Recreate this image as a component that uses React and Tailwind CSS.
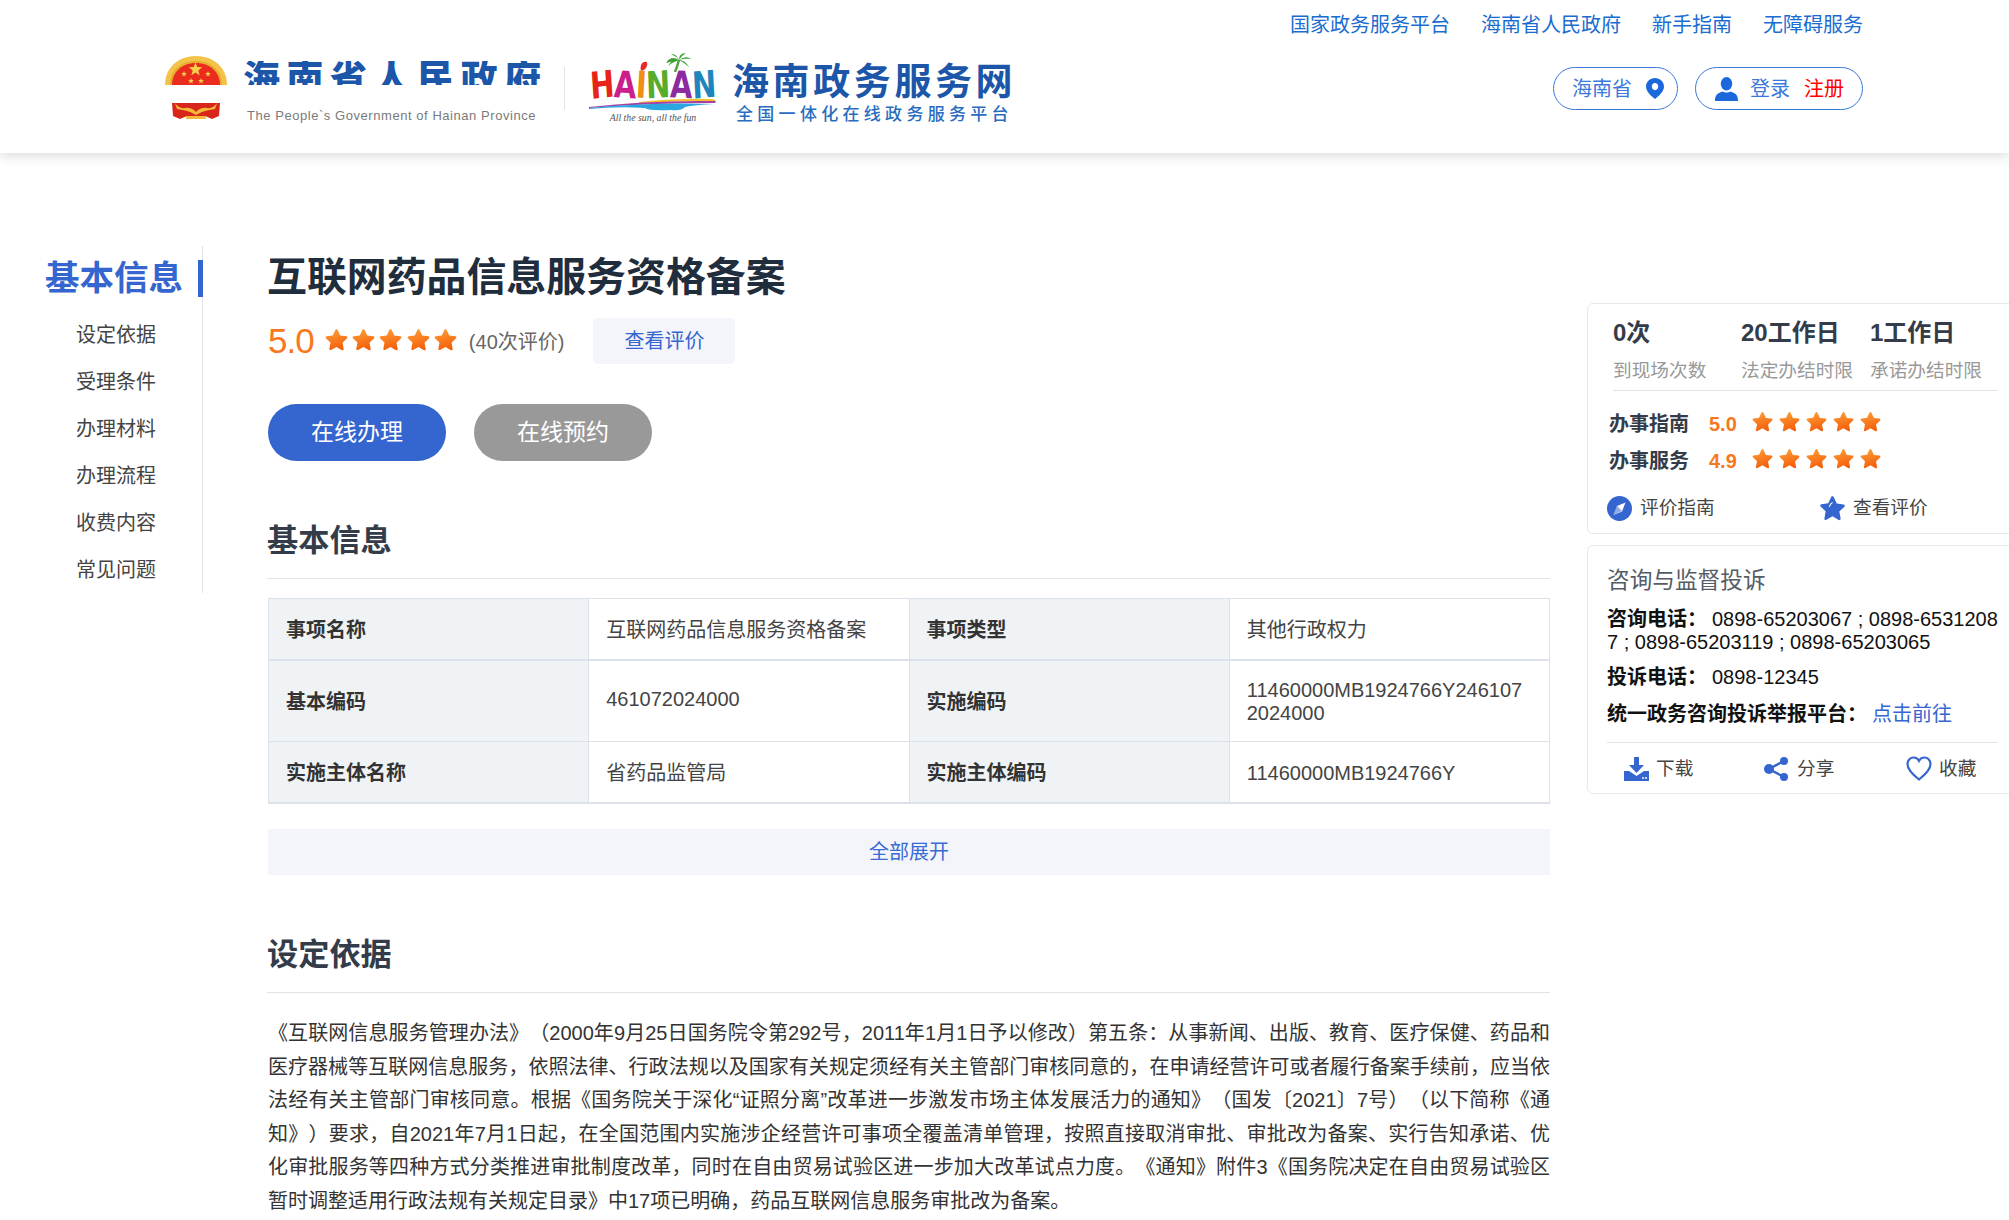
import React from "react";

const FONT = '"Liberation Sans","Noto Sans CJK SC",sans-serif';
const STAR = "M12 1.2c.5 0 .9.3 1.1.7l2.8 6 6.4.8c1 .1 1.4 1.4.7 2.1l-4.7 4.5 1.2 6.5c.2 1-.9 1.8-1.8 1.3L12 19.7l-5.7 3.2c-.9.5-2-.3-1.8-1.3l1.2-6.5-4.7-4.5c-.7-.7-.3-2 .7-2.1l6.4-.8 2.8-6c.2-.4.6-.7 1.1-.7z";

function Star({ size, id }) {
  return (
    <svg width={size} height={size} viewBox="0 0 24 24" className="shrink-0">
      <defs>
        <linearGradient id={id} x1="0" y1="0" x2="0.3" y2="1">
          <stop offset="0" stopColor="#ffa33a" />
          <stop offset="1" stopColor="#f4610d" />
        </linearGradient>
      </defs>
      <path d={STAR} fill={`url(#${id})`} />
    </svg>
  );
}

function Stars({ size, pitchClass, prefix }) {
  return (
    <div className={`flex ${pitchClass}`}>
      {[0, 1, 2, 3, 4].map((i) => (
        <Star key={i} size={size} id={`${prefix}${i}`} />
      ))}
    </div>
  );
}

function Emblem() {
  const small = (cx, cy, r) => {
    const pts = [];
    for (let i = 0; i < 10; i++) {
      const a = -Math.PI / 2 + (i * Math.PI) / 5;
      const d = i % 2 ? r * 0.42 : r;
      pts.push(`${(cx + d * Math.cos(a)).toFixed(2)},${(cy + d * Math.sin(a)).toFixed(2)}`);
    }
    return pts.join(" ");
  };
  return (
    <svg width="62" height="64" viewBox="0 0 62 64" className="shrink-0">
      <path d="M0 29C0 11 14 0 31 0s31 11 31 29z" fill="#f4c34a" />
      <path d="M5 29C5 14 16 5 31 5s26 9 26 24z" fill="#e8ac2f" />
      <path d="M7 29C7 16 17 7 31 7s24 9 24 22z" fill="#ea2c1f" />
      <polygon points={small(30.5, 13.5, 7)} fill="#f9d24a" />
      <polygon points={small(19, 18, 3)} fill="#f9d24a" />
      <polygon points={small(26, 25, 3)} fill="#f9d24a" />
      <polygon points={small(36, 25, 3)} fill="#f9d24a" />
      <polygon points={small(43, 18, 3)} fill="#f9d24a" />
      <path d="M7 47h48l-1 13-7 3-7-3-9 2-9-2-7 3-7-3z" fill="#d9261b" />
      <path d="M10 47q4 6 10 5t11 4q5-5 11-4t10-5l-2 6q-6 1-10 2t-9 4q-5-3-9-4t-10-2z" fill="#f4b93a" />
      <path d="M21 60h20v3H21z" fill="#f4b93a" />
    </svg>
  );
}

function HainanLogo() {
  const letters = [
    ["H", "#e8231a", "-rotate-[5deg]"],
    ["A", "#c9208c", "rotate-[3deg]"],
    ["I", "#ef8f14", "rotate-[4deg]"],
    ["N", "#57ac2c", "rotate-[-3deg]"],
    ["A", "#8e2a9f", "rotate-[2deg]"],
    ["N", "#1f86bd", "rotate-[-4deg]"],
  ];
  return (
    <div className="w-[128px] h-[72px] flex flex-col items-center">
      <svg width="128" height="19" viewBox="0 0 128 19" className="shrink-0">
        <path d="M86 19q3-8 4-12" stroke="#4aa238" strokeWidth="2.400" fill="none" />
        <path d="M90 7q-8-5-13 3 6-2 13-3zM90 7q-6-2-11 6 5-4 11-6zM90 7q-3-7-8-6 5 2 8 6zM90 7q0-7 7-7-5 3-7 7zM90 7q7-5 12-1-6-1-12 1zM90 7q6 0 10 7-4-4-10-7z" fill="#3ea135" />
        <path d="M52 12q2-4 6-3 1 3-1 6t-5 3q-1-3 0-6z" fill="#e62a2a" />
      </svg>
      <div className="h-[26px] flex items-center scale-y-[1.28] font-bold text-[29px] leading-[26px] tracking-[-0.5px]" style={{ fontFamily: '"DejaVu Sans",sans-serif' }}>
        {letters.map(([l, c, r], i) => (
          <span key={i} className={`inline-block ${r}`} style={{ color: c }}>{l}</span>
        ))}
      </div>
      <svg width="128" height="15" viewBox="0 0 128 15" className="shrink-0">
        <path d="M50 4Q90 0 124 1L127 3Q90 3 50 5z" fill="#f4c329" />
        <path d="M0 9Q60 2 127 3L126 5Q60 5 0 10z" fill="#a93ea5" />
        <path d="M0 10Q60 4 126 6 105 7 96 9 92 13 82 12 60 13 56 10 30 8 0 11z" fill="#2aa7e0" />
      </svg>
      <div className="mt-[-1px] italic text-[9.800px] leading-[12px] text-[#555] whitespace-nowrap" style={{ fontFamily: '"Liberation Serif",serif' }}>All the sun, all the fun</div>
    </div>
  );
}

function Header() {
  return (
    <header className="h-[153px] bg-white flex shadow-[0_3px_12px_rgba(0,0,0,0.14)] relative">
      <div className="ml-[165px] pt-[53px] flex items-start">
        <div className="pt-[3px]"><Emblem /></div>
        <div className="ml-[16px] w-[300px] pt-[8px]">
          <div className="h-[24px] overflow-hidden text-[#1c56a8] font-black text-[37px] leading-[37px] tracking-[6.500px] whitespace-nowrap">海南省人民政府</div>
          <div className="mt-[22px] ml-[4px] text-[13px] leading-[17px] tracking-[0.55px] text-[#7a7a7a] whitespace-nowrap">The People`s Government of Hainan Province</div>
        </div>
        <div className="ml-[21px] mt-[14px] w-px h-[43px] bg-[#e2e2e2]"></div>
        <div className="ml-[24px]"><HainanLogo /></div>
        <div className="ml-[15px] pt-[8px]">
          <div className="text-[#1c56a8] font-bold text-[37px] leading-[44px] tracking-[3.600px] whitespace-nowrap">海南政务服务网</div>
          <div className="ml-[4px] text-[#2a6cc0] font-medium text-[17px] leading-[20px] tracking-[4.300px] whitespace-nowrap">全国一体化在线政务服务平台</div>
        </div>
      </div>
      <div className="ml-auto mr-[146px] flex flex-col items-end">
        <nav className="flex gap-[31px] text-[20px] leading-[24px] text-[#1a6dd0] pt-[13px]">
          <span>国家政务服务平台</span>
          <span>海南省人民政府</span>
          <span>新手指南</span>
          <span>无障碍服务</span>
        </nav>
        <div className="mt-[30px] flex gap-[17px]">
          <div className="w-[125px] h-[43px] rounded-full border border-[#3b78dc] flex items-center pl-[18px] text-[20px] text-[#3b78dc]">
            <span>海南省</span>
            <svg width="18" height="21" viewBox="0 0 19 22" className="ml-[14px]">
              <path fillRule="evenodd" d="M9.5 0C4.2 0 0 4 0 9c0 5 5 10 9.5 13C14 19 19 14 19 9c0-5-4.2-9-9.5-9zm0 5.2c2 0 3.4 1.7 3.4 3.8S11.500 12.800 9.500 12.800 6.100 11.100 6.100 9s1.400-3.800 3.400-3.800z" fill="#1a68dc" />
            </svg>
          </div>
          <div className="w-[168px] h-[43px] rounded-full border border-[#3b78dc] flex items-center pl-[19px] text-[20px] text-[#3b78dc]">
            <svg width="23" height="24" viewBox="0 0 24 25">
              <ellipse cx="12" cy="7" rx="6" ry="7" fill="#1a68dc" />
              <path d="M0 25c0-6 2-8 8-10 2 1.500 6 1.500 8 0 6 2 8 4 8 10z" fill="#1a68dc" />
            </svg>
            <span className="ml-[12px]">登录</span>
            <span className="ml-[14px] text-[#ff0000]">注册</span>
          </div>
        </div>
      </div>
    </header>
  );
}

function SideNav() {
  const items = ["设定依据", "受理条件", "办理材料", "办理流程", "收费内容", "常见问题"];
  return (
    <aside className="w-[203px] shrink-0 h-[347px] border-r border-[#dfe3ea] mt-[93px]">
      <div className="flex items-center justify-end h-[37px] mt-[14px] mr-[-1px]">
        <span className="text-[34.500px] leading-[37px] font-bold text-[#3565cf] mr-[15px] whitespace-nowrap">基本信息</span>
        <span className="w-[5px] h-[37px] bg-[#3565cf]"></span>
      </div>
      <ul className="mt-[14.500px] pl-[76px] text-[20px] text-[#444]">
        {items.map((t) => (
          <li key={t} className="h-[47px] leading-[47px]">{t}</li>
        ))}
      </ul>
    </aside>
  );
}

function Cell({ head, thick, children }) {
  return (
    <div className={`${head ? "bg-[#f0f3f6] font-bold text-[#333]" : "bg-white text-[#444]"} ${thick ? "border-b-2" : "border-b"} border-r border-[#dde2ea] px-[17px] pt-[2px] flex items-center text-[20px] leading-[23px] break-all`}>
      {children}
    </div>
  );
}

function Main() {
  return (
    <main className="w-[1282px] shrink-0 ml-[65px] pt-[96px]">
      <h1 className="-ml-px text-[39.900px] leading-[56px] font-bold text-[#1f2d3d] whitespace-nowrap">互联网药品信息服务资格备案</h1>
      <div className="mt-[13px] flex items-center h-[46px]">
        <span className="text-[35px] font-light text-[#f7781d] leading-[46px] tracking-[-1px]">5.0</span>
        <div className="ml-[11px] mb-[3px]"><Stars size={23} pitchClass="gap-[4.300px]" prefix="t" /></div>
        <span className="ml-[12px] mt-[2px] text-[20px] text-[#666]">(40次评价)</span>
        <span className="ml-[29px] w-[142px] h-[46px] rounded-[5px] bg-[#f3f5fa] text-[#3565cf] text-[20px] flex items-center justify-center">查看评价</span>
      </div>
      <div className="mt-[40px] flex gap-[28px]">
        <span className="w-[178px] h-[57px] rounded-full bg-[#3565cf] text-white text-[23px] flex items-center justify-center">在线办理</span>
        <span className="w-[178px] h-[57px] rounded-full bg-[#999999] text-white text-[23px] flex items-center justify-center">在线预约</span>
      </div>
      <h2 className="-ml-px mt-[57px] h-[61px] border-b border-[#dfe3ea] text-[31.200px] leading-[45px] font-bold text-[#333c48]">基本信息</h2>
      <div className="mt-[19px] grid grid-cols-4 grid-rows-[62px_81px_62px] border-t border-l border-[#dde2ea]">
        <Cell head thick>事项名称</Cell>
        <Cell thick>互联网药品信息服务资格备案</Cell>
        <Cell head thick>事项类型</Cell>
        <Cell thick>其他行政权力</Cell>
        <Cell head>基本编码</Cell>
        <Cell><span className="-mt-[5px]">461072024000</span></Cell>
        <Cell head>实施编码</Cell>
        <Cell><span>11460000MB1924766Y2461072024000</span></Cell>
        <Cell head thick>实施主体名称</Cell>
        <Cell thick>省药品监管局</Cell>
        <Cell head thick>实施主体编码</Cell>
        <Cell thick>11460000MB1924766Y</Cell>
      </div>
      <div className="mt-[25px] h-[46px] bg-[#f3f5fa] text-[#3a6bd4] text-[20px] flex items-center justify-center">全部展开</div>
      <h2 className="-ml-px mt-[56px] h-[62px] border-b border-[#dfe3ea] text-[31.200px] leading-[48px] font-bold text-[#333c48]">设定依据</h2>
      <p className="mt-[24px] text-[20px] leading-[33.600px] text-[#333] text-justify [text-spacing-trim:space-all]">
        《互联网信息服务管理办法》（2000年9月25日国务院令第292号，2011年1月1日予以修改）第五条：从事新闻、出版、教育、医疗保健、药品和医疗器械等互联网信息服务，依照法律、行政法规以及国家有关规定须经有关主管部门审核同意的，在申请经营许可或者履行备案手续前，应当依法经有关主管部门审核同意。根据《国务院关于深化“证照分离”改革进一步激发市场主体发展活力的通知》（国发〔2021〕7号）（以下简称《通知》）要求，自2021年7月1日起，在全国范围内实施涉企经营许可事项全覆盖清单管理，按照直接取消审批、审批改为备案、实行告知承诺、优化审批服务等四种方式分类推进审批制度改革，同时在自由贸易试验区进一步加大改革试点力度。《通知》附件3《国务院决定在自由贸易试验区暂时调整适用行政法规有关规定目录》中17项已明确，药品互联网信息服务审批改为备案。
      </p>
    </main>
  );
}

function Stat({ value, label, w }) {
  return (
    <div className={`${w} shrink-0`}>
      <div className="text-[24px] leading-[32px] font-bold text-[#333c48] whitespace-nowrap">{value}</div>
      <div className="mt-[8px] text-[18.670px] leading-[28px] text-[#999] whitespace-nowrap">{label}</div>
    </div>
  );
}

function RatingRow({ label, score, prefix }) {
  return (
    <div className="flex items-center h-[37.500px] text-[20px] font-bold">
      <span className="text-[#333c48] w-[100px]">{label}</span>
      <span className="text-[#f7781d] w-[43px]">{score}</span>
      <div className="-mt-[5px]"><Stars size={21} pitchClass="gap-[6px]" prefix={prefix} /></div>
    </div>
  );
}

function Right() {
  return (
    <aside className="ml-[37px] w-[431px] shrink-0 pt-[150px]">
      <section className="h-[231px] border border-[#e8e8e8] rounded-[6px] bg-white pl-[19px] pr-[19px]">
        <div className="ml-[6px] pt-[13px] h-[87px] border-b border-[#e2e2e2] flex">
          <Stat w="w-[128px]" value="0次" label="到现场次数" />
          <Stat w="w-[129px]" value="20工作日" label="法定办结时限" />
          <Stat w="w-[128px]" value="1工作日" label="承诺办结时限" />
        </div>
        <div className="mt-[14px] ml-[2px]">
          <RatingRow label="办事指南" score="5.0" prefix="a" />
          <RatingRow label="办事服务" score="4.9" prefix="b" />
        </div>
        <div className="mt-[14px] flex items-center h-[28px] text-[18.670px] text-[#444]">
          <svg width="25" height="25" viewBox="0 0 25 25" className="shrink-0">
            <circle cx="12.500" cy="12.500" r="12.500" fill="#3565cf" />
            <path d="M18.500 6.500l-3.500 9-8.500 3.500 3.500-9z" fill="#fff" />
            <path d="M10 10l5 5-8.500 4z" fill="#3565cf" opacity=".55" />
          </svg>
          <span className="ml-[8px] w-[179px]">评价指南</span>
          <svg width="27" height="26" viewBox="0 0 24 24" className="shrink-0">
            <path d={STAR} fill="#3565cf" />
            <path d="M12 7q-2 1-3 4" stroke="#fff" strokeWidth="1" fill="none" />
          </svg>
          <span className="ml-[7px]">查看评价</span>
        </div>
      </section>
      <section className="mt-[11px] h-[249px] border border-[#e8e8e8] rounded-[6px] bg-white pl-[19px] w-full">
        <div className="w-[391px]">
          <h3 className="pt-[19px] text-[22.670px] leading-[30px] text-[#555c66]">咨询与监督投诉</h3>
          <p className="mt-[13px] w-[395px] text-[20px] leading-[23px] text-[#111] break-all">
            <b className="mr-[5px]">咨询电话：</b>0898-65203067 ; 0898-65312087 ; 0898-65203119 ; 0898-65203065
          </p>
          <p className="mt-[12px] text-[20px] leading-[23px] text-[#111]">
            <b className="mr-[5px]">投诉电话：</b>0898-12345
          </p>
          <p className="mt-[14px] text-[20px] leading-[23px] text-[#111]">
            <b className="mr-[5px]">统一政务咨询投诉举报平台：</b><span className="text-[#3565cf]">点击前往</span>
          </p>
          <div className="mt-[16px] h-[52px] border-t border-[#e2e2e2] flex items-center text-[18.670px] text-[#444]">
            <svg width="25" height="24" viewBox="0 0 25 24" className="ml-[17px] shrink-0">
              <path d="M10 0h5v8h5l-7.500 8L5 8h5z" fill="#3565cf" />
              <path d="M0 14h5l7.500 5 7.500-5h5v10H0z" fill="#3565cf" />
              <circle cx="19" cy="21" r="1" fill="#fff" />
              <circle cx="22" cy="21" r="1" fill="#fff" />
            </svg>
            <span className="ml-[7px] w-[108px]">下载</span>
            <svg width="25" height="24" viewBox="0 0 25 24" className="shrink-0">
              <circle cx="20" cy="4" r="4" fill="#3565cf" />
              <circle cx="20" cy="20" r="4" fill="#3565cf" />
              <circle cx="5" cy="12" r="5" fill="#3565cf" />
              <path d="M20 4L5 12l15 8" stroke="#3565cf" strokeWidth="2.500" fill="none" />
            </svg>
            <span className="ml-[8px] w-[109px]">分享</span>
            <svg width="26" height="25" viewBox="0 0 26 25" className="shrink-0">
              <path d="M13 23.500C6 18 1.500 13.500 1.500 8 1.500 4 4.500 1.500 7.500 1.500c2.500 0 4.500 1.200 5.500 3.300 1-2.100 3-3.300 5.500-3.300 3 0 6 2.500 6 6.500 0 5.500-4.500 10-11.500 15.500z" stroke="#3565cf" strokeWidth="2.200" fill="none" />
            </svg>
            <span className="ml-[7px]">收藏</span>
          </div>
        </div>
      </section>
    </aside>
  );
}

export default function App() {
  return (
    <div className="w-[2009px] h-[1220px] overflow-hidden bg-white" style={{ fontFamily: FONT }}>
      <Header />
      <div className="flex items-start">
        <SideNav />
        <Main />
        <Right />
      </div>
    </div>
  );
}
